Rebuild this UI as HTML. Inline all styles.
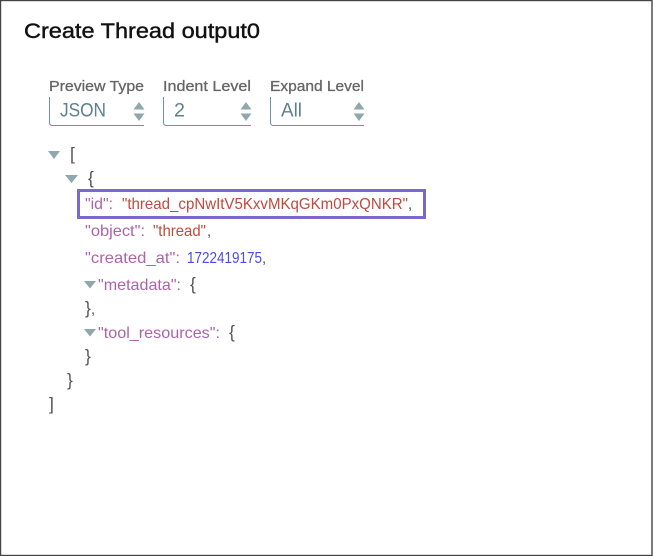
<!DOCTYPE html>
<html>
<head>
<meta charset="utf-8">
<style>
html,body{margin:0;padding:0;background:#fff;width:653px;height:556px;overflow:hidden}
svg{display:block;position:absolute;left:0;top:0}
text{font-family:"Liberation Sans",sans-serif;white-space:pre}
.t{font-size:21px;fill:#111;stroke:#111;stroke-width:.4px}
.l{font-size:15px;fill:#666;stroke:#666;stroke-width:.3px}
.v{font-size:19px;fill:#5d7f8f}
.k{font-size:16px;fill:#ae62ab}
.s{font-size:16px;fill:#c04a3e}
.n{font-size:16px;fill:#4a4ae6}
.p{font-size:15px;fill:#555}
.b{font-size:17.5px;fill:#555}
.sel{fill:none;stroke:#6f929f;stroke-width:1}
.a{fill:#8fa8ae}
</style>
</head>
<body>
<svg width="653" height="556" viewBox="0 0 653 556" xmlns="http://www.w3.org/2000/svg">
<rect x="0.5" y="0.5" width="651.5" height="555" fill="#fff" stroke="#444" stroke-width="1.4"/>
<text class="t" x="24" y="38" textLength="236" lengthAdjust="spacingAndGlyphs">Create Thread output0</text>

<text class="l" x="49" y="91" textLength="95" lengthAdjust="spacingAndGlyphs">Preview Type</text>
<text class="l" x="163" y="91" textLength="88" lengthAdjust="spacingAndGlyphs">Indent Level</text>
<text class="l" x="270" y="91" textLength="94" lengthAdjust="spacingAndGlyphs">Expand Level</text>

<path class="sel" d="M49.500 97V122.500Q49.500 125.500 52.500 125.500H144"/>
<path class="sel" d="M163.500 97V122.500Q163.500 125.500 166.500 125.500H251"/>
<path class="sel" d="M270.500 97V122.500Q270.500 125.500 273.500 125.500H364"/>

<text class="v" x="60" y="116.500" textLength="46" lengthAdjust="spacingAndGlyphs">JSON</text>
<text class="v" x="174" y="116.500" textLength="11" lengthAdjust="spacingAndGlyphs">2</text>
<text class="v" x="281" y="116.500" textLength="21" lengthAdjust="spacingAndGlyphs">All</text>

<path class="a" d="M133.500 109.500L139 102L144.500 109.500Z"/>
<path class="a" d="M133.500 113.500H144.500L139 121Z"/>
<path class="a" d="M240.500 109.500L246 102L251.500 109.500Z"/>
<path class="a" d="M240.500 113.500H251.500L246 121Z"/>
<path class="a" d="M353.500 109.500L359 102L364.500 109.500Z"/>
<path class="a" d="M353.500 113.500H364.500L359 121Z"/>

<path class="a" d="M48 151H60L54 159Z"/>
<text class="b" x="70" y="160">[</text>
<path class="a" d="M65 175H78L71.500 183Z"/>
<text class="b" x="88" y="184">{</text>

<rect x="78.500" y="190.500" width="346" height="27" fill="none" stroke="#7b68ce" stroke-width="3"/>
<text class="k" x="85" y="209" textLength="28" lengthAdjust="spacingAndGlyphs">"id":</text>
<text class="s" x="122" y="209" textLength="286" lengthAdjust="spacingAndGlyphs">"thread_cpNwItV5KxvMKqGKm0PxQNKR"</text>
<text class="p" x="408" y="209">,</text>

<text class="k" x="85" y="236" textLength="60" lengthAdjust="spacingAndGlyphs">"object":</text>
<text class="s" x="153" y="236" textLength="53" lengthAdjust="spacingAndGlyphs">"thread"</text>
<text class="p" x="207" y="236">,</text>

<text class="k" x="85" y="263" textLength="95" lengthAdjust="spacingAndGlyphs">"created_at":</text>
<text class="n" x="187" y="263" textLength="75" lengthAdjust="spacingAndGlyphs">1722419175</text>
<text class="p" x="262" y="263">,</text>

<path class="a" d="M84 281H96L90 288.500Z"/>
<text class="k" x="98" y="290" textLength="83" lengthAdjust="spacingAndGlyphs">"metadata":</text>
<text class="b" x="190" y="290">{</text>
<text class="b" x="85" y="314">}</text>
<text class="p" x="91" y="314">,</text>

<path class="a" d="M84 329H96L90 336.500Z"/>
<text class="k" x="98" y="338" textLength="122" lengthAdjust="spacingAndGlyphs">"tool_resources":</text>
<text class="b" x="229" y="338">{</text>
<text class="b" x="85" y="362">}</text>
<text class="b" x="67" y="386">}</text>
<text class="b" x="49" y="410">]</text>
</svg>
</body>
</html>
